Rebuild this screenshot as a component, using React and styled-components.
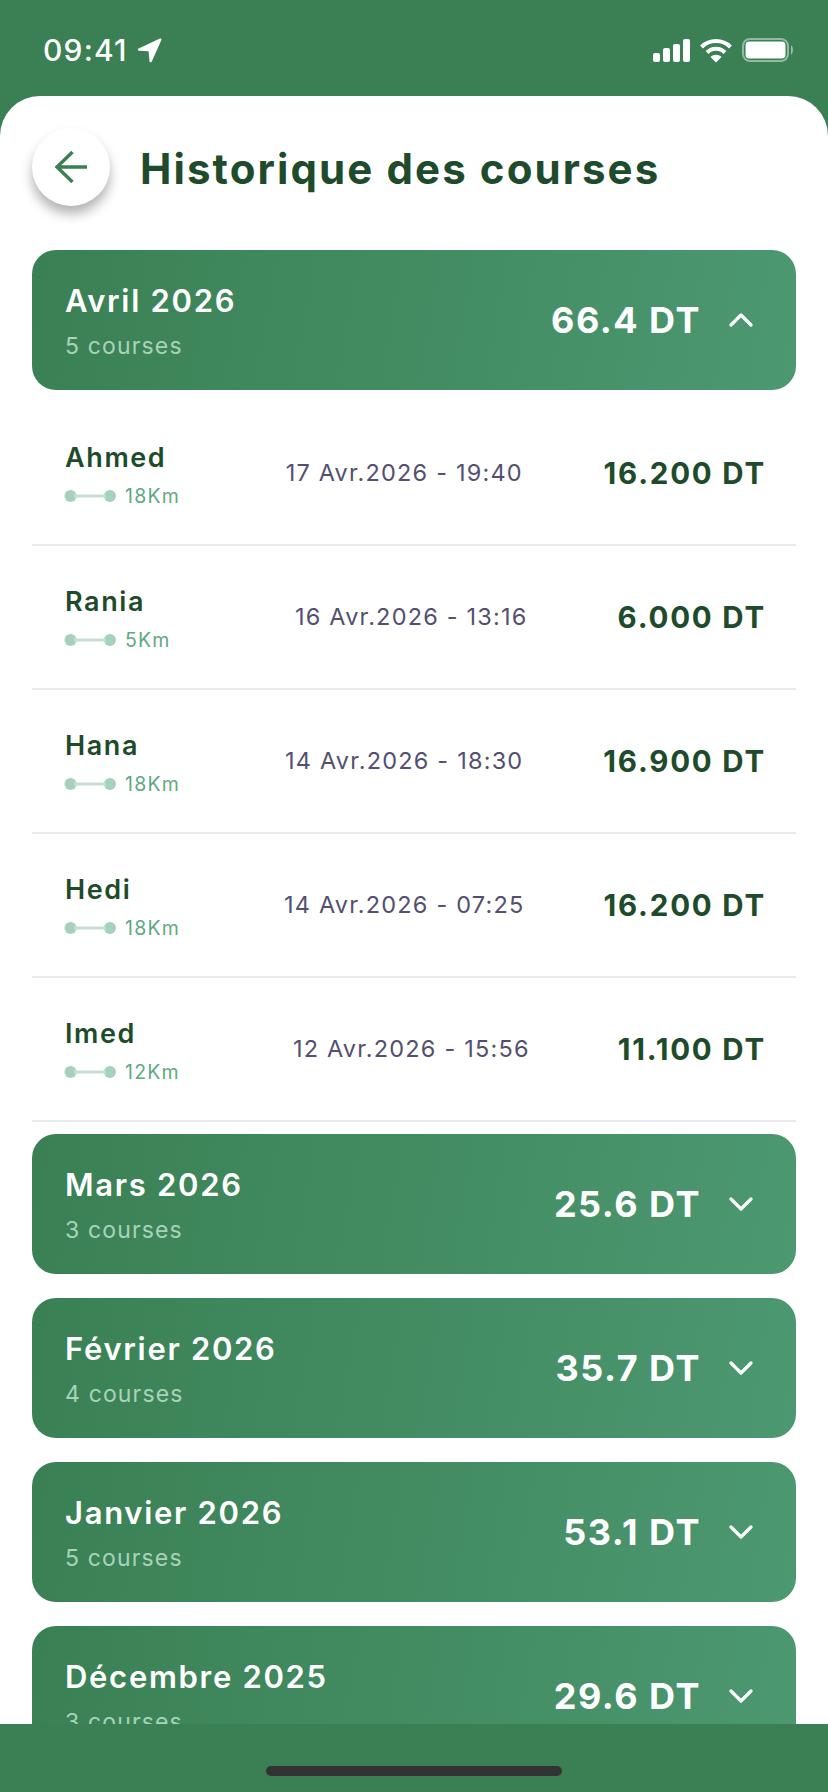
import React from "react";
import styled, { createGlobalStyle } from "styled-components";

const Global = createGlobalStyle`
  html, body { margin: 0; padding: 0; background: #3a8054; }
  * { box-sizing: border-box; font-optical-sizing: none; font-variation-settings: "opsz" 14; }
`;

const Phone = styled.div`
  width: 828px; height: 1792px; display: flex; flex-direction: column;
  background: #3a8054; overflow: hidden;
  font-family: Inter, "Liberation Sans", sans-serif;
`;
const StatusBar = styled.div`
  flex: 0 0 96px; display: flex; justify-content: space-between; align-items: flex-start;
  padding: 32px 34px 0 43px; color: #fff;
`;
const Clock = styled.div`
  display: flex; align-items: center; gap: 9px; height: 36px;
  font-size: 30px; line-height: 36px; font-weight: 500; letter-spacing: 1.2px;
`;
const StatusIcons = styled.div`
  display: flex; align-items: center; gap: 10px; height: 36px;
`;
const Sheet = styled.main`
  flex: 1 1 0; min-height: 0; overflow: hidden; background: #fff;
  border-radius: 40px 40px 0 0; padding: 32px 32px 0;
`;
const Header = styled.header`
  display: flex; align-items: center; gap: 30px; height: 78px; margin-bottom: 44px;
`;
const BackButton = styled.button`
  width: 78px; height: 78px; border: 0; border-radius: 50%; background: #fff; padding: 0;
  display: flex; align-items: center; justify-content: center; flex: none;
  box-shadow: 0 8px 12px rgba(0, 0, 0, 0.3);
`;
const Title = styled.h1`
  margin: 0; padding-top: 3px; font-size: 42px; line-height: 52px; font-weight: 700; color: #1e4b2c; letter-spacing: 2.1px;
`;
const MonthCard = styled.section`
  height: 140px; border-radius: 24px; display: flex; align-items: center; justify-content: space-between;
  padding: 0 43px 0 33px; color: #fff; background: linear-gradient(100deg, #3a8054 0%, #4c9871 100%);
  margin-top: ${(p) => (p.$tight ? "12px" : "24px")};
  &:first-of-type { margin-top: 0; }
`;
const MonthInfo = styled.div`
  display: flex; flex-direction: column; gap: 12px; padding-top: 2px;
`;
const MonthName = styled.div`
  font-size: 31px; line-height: 38px; font-weight: 600; letter-spacing: 1.7px;
`;
const MonthCount = styled.div`
  font-size: 23px; line-height: 28px; letter-spacing: 1.15px; color: #a9d3ba;
`;
const MonthTotal = styled.div`
  display: flex; align-items: center; gap: 28px;
`;
const Amount = styled.div`
  font-size: 36px; line-height: 44px; font-weight: 700; letter-spacing: 1.5px;
`;
const RowList = styled.div`
  padding-top: 12px;
`;
const Row = styled.div`
  height: 144px; display: flex; align-items: center; justify-content: space-between;
  padding: 0 30px 0 33px; border-bottom: 2px solid #e9e8ee;
`;
const Driver = styled.div`
  width: 140px; flex: none; display: flex; flex-direction: column; gap: 10px; margin-top: 4px;
`;
const DriverName = styled.div`
  font-size: 27px; line-height: 32px; font-weight: 600; color: #1e4b2c; letter-spacing: 1.6px;
`;
const Distance = styled.div`
  display: flex; align-items: center; gap: 9px; margin-left: -1px;
  font-size: 19.5px; line-height: 24px; color: #62a884; letter-spacing: 1.2px;
`;
const DateText = styled.div`
  font-size: 23.5px; line-height: 30px; color: #544f70; letter-spacing: 1.2px;
`;
const Price = styled.div`
  font-size: 29.5px; line-height: 36px; font-weight: 700; color: #1e4b2c; letter-spacing: 1.8px;
`;
const BottomBar = styled.footer`
  flex: 0 0 68px; background: #3a8054; display: flex; justify-content: center; align-items: flex-start;
  padding-top: 42px;
`;
const HomeIndicator = styled.div`
  width: 296px; height: 10px; border-radius: 5px; background: #333;
`;

const Chevron = ({ up }) => (
  <svg width="24" height="14" viewBox="0 0 24 14" fill="none" stroke="#fff" strokeWidth="3.2" strokeLinecap="round" strokeLinejoin="round">
    <path d={up ? "M2 12 12 2 22 12" : "M2 2 12 12 22 2"} />
  </svg>
);
const Route = () => (
  <svg width="52" height="14" viewBox="0 0 52 14" fill="#a8d1bc">
    <circle cx="6.5" cy="7" r="6" />
    <circle cx="46" cy="7" r="6" />
    <rect x="10" y="5.500" width="32" height="3" fill="#c5e0d1" />
  </svg>
);

const rides = [
  ["Ahmed", "18Km", "17 Avr.2026 - 19:40", "16.200 DT"],
  ["Rania", "5Km", "16 Avr.2026 - 13:16", "6.000 DT"],
  ["Hana", "18Km", "14 Avr.2026 - 18:30", "16.900 DT"],
  ["Hedi", "18Km", "14 Avr.2026 - 07:25", "16.200 DT"],
  ["Imed", "12Km", "12 Avr.2026 - 15:56", "11.100 DT"],
];
const months = [
  ["Mars 2026", "3 courses", "25.6 DT"],
  ["Février 2026", "4 courses", "35.7 DT"],
  ["Janvier 2026", "5 courses", "53.1 DT"],
  ["Décembre 2025", "3 courses", "29.6 DT"],
];

const Month = ({ name, count, total, open, tight }) => (
  <MonthCard $tight={tight}>
    <MonthInfo>
      <MonthName>{name}</MonthName>
      <MonthCount>{count}</MonthCount>
    </MonthInfo>
    <MonthTotal>
      <Amount>{total}</Amount>
      <Chevron up={open} />
    </MonthTotal>
  </MonthCard>
);

export default function App() {
  return (
    <Phone>
      <Global />
      <StatusBar>
        <Clock>
          09:41
          <svg width="25" height="25" viewBox="0 0 25 25" fill="#fff">
            <path d="M23 .6 1.600 10.400c-1.200.6-.9 2.200.4 2.300l9.600.6.9 9.900c.1 1.300 1.700 1.600 2.300.4L24.400 2c.4-1-.5-1.800-1.400-1.400Z" />
          </svg>
        </Clock>
        <StatusIcons>
          <svg width="37" height="23" viewBox="0 0 37 23" fill="#fff">
            <rect x="0" y="14" width="7" height="9" rx="2" />
            <rect x="10" y="9" width="7" height="14" rx="2" />
            <rect x="20" y="5" width="7" height="18" rx="2" />
            <rect x="30" y="0" width="7" height="23" rx="2" />
          </svg>
          <svg width="32" height="25" viewBox="0 0 32 25" fill="none" stroke="#fff" strokeWidth="4">
            <path d="M1.500 9C9.500 1 22.500 1 30.500 9" />
            <path d="M7 14.500c5-5 13-5 18 0" />
            <path d="M16 24.500 10.500 19c3-3 8-3 11 0Z" fill="#fff" stroke="none" />
          </svg>
          <svg width="52" height="24" viewBox="0 0 52 24" fill="none">
            <rect x="1" y="1" width="45" height="22" rx="7" stroke="#fff" strokeOpacity="0.45" strokeWidth="2" />
            <rect x="3.500" y="3.500" width="40" height="17" rx="4" fill="#fff" />
            <path d="M49 7.500c2.500.6 2.500 8.400 0 9Z" fill="#fff" fillOpacity="0.5" />
          </svg>
        </StatusIcons>
      </StatusBar>
      <Sheet>
        <Header>
          <BackButton aria-label="Retour">
            <svg width="34" height="34" viewBox="0 0 34 34" fill="none" stroke="#3a8054" strokeWidth="3.4">
              <path d="M33 17H3M18.500 2 3 17 18.500 32" />
            </svg>
          </BackButton>
          <Title>Historique des courses</Title>
        </Header>
        <Month name="Avril 2026" count="5 courses" total="66.4 DT" open />
        <RowList>
          {rides.map(([n, d, dt, p]) => (
            <Row key={n}>
              <Driver>
                <DriverName>{n}</DriverName>
                <Distance><Route />{d}</Distance>
              </Driver>
              <DateText>{dt}</DateText>
              <Price>{p}</Price>
            </Row>
          ))}
        </RowList>
        {months.map(([n, c, t], i) => (
          <Month key={n} name={n} count={c} total={t} tight={i === 0} />
        ))}
      </Sheet>
      <BottomBar><HomeIndicator /></BottomBar>
    </Phone>
  );
}
